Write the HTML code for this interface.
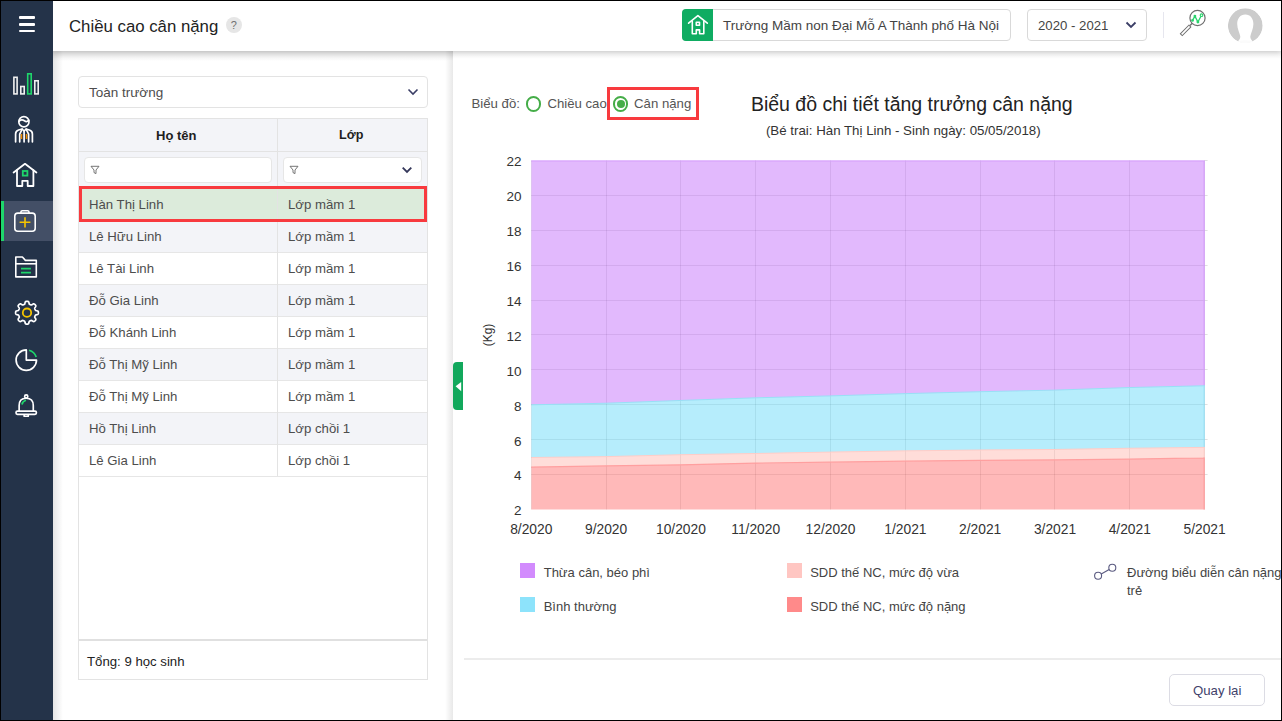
<!DOCTYPE html>
<html><head><meta charset="utf-8">
<style>
*{box-sizing:border-box;margin:0;padding:0}
html,body{width:1282px;height:721px;overflow:hidden;background:#000;font-family:"Liberation Sans",sans-serif;}
.abs{position:absolute}
#app{position:absolute;left:1px;top:1px;width:1280px;height:719px;background:#fff;overflow:hidden}
#side{position:absolute;left:0;top:0;width:52px;height:719px;background:#243349;z-index:4}
#header{position:absolute;left:52px;top:0;width:1228px;height:50px;background:#fff;z-index:3;box-shadow:0 1px 6px rgba(0,0,0,0.18)}
#left{position:absolute;left:52px;top:50px;width:400px;height:669px;background:#fff;overflow:hidden}
#right{position:absolute;left:452px;top:50px;width:828px;height:669px;background:#fff;overflow:hidden}
.t{position:absolute;white-space:nowrap;line-height:1}
</style></head><body>
<div id="app">
  <div id="side">
    <div class="abs" style="left:17.8px;top:15px;width:16.6px;height:2.8px;background:#fff;border-radius:1px"></div>
    <div class="abs" style="left:17.8px;top:21.8px;width:16.6px;height:2.8px;background:#fff;border-radius:1px"></div>
    <div class="abs" style="left:17.8px;top:28.5px;width:16.6px;height:2.8px;background:#fff;border-radius:1px"></div>
    <div class="abs" style="left:0;top:200px;width:52px;height:40px;background:#434f66"></div>
    <div class="abs" style="left:0;top:200px;width:3px;height:40px;background:#1ed66b"></div>
    <svg class="abs" style="left:0;top:0" width="52" height="719" viewBox="0 0 52 719">
      <g fill="none" stroke="#fff" stroke-width="1.8">
        <!-- bars -->
      <g fill="none" stroke="#f0f0f0" stroke-width="1.6">
        <rect x="12.9" y="76.3" width="3.2" height="16.6"/>
        <rect x="19.8" y="85.5" width="3.4" height="7.4"/>
        <rect x="33.8" y="79.8" width="3.4" height="13.1"/>
      </g>
      <rect x="26.7" y="72.8" width="3.5" height="20.1" fill="none" stroke="#1ed66b" stroke-width="1.6"/>
      <!-- person -->
      <g fill="none" stroke="#fff" stroke-width="1.7" stroke-linecap="round" stroke-linejoin="round">
        <circle cx="22.9" cy="120.8" r="5.1"/>
        <path d="M18.2 120.2 Q20.6 118 23.4 119.8 Q25.8 121.4 27.8 119.4"/>
        <path d="M14.6 140.8 V133 Q14.6 129.9 17.6 129 L21.2 128 L23.1 130 L25.1 128 L28.4 129 Q31.4 129.9 31.4 133 V140.8"/>
        <path d="M21.2 128.2 L18.7 133.2 V140.8 M25.1 128.2 L27.6 133.2 V140.8 M23.1 130.4 V140.8"/>
      </g>
      <path d="M20.5 133 V138 M25.5 133 V138" stroke="#f08c00" stroke-width="1.5"/>
      <!-- house -->
      <g fill="none" stroke="#fff" stroke-width="1.8" stroke-linejoin="round" stroke-linecap="round">
        <path d="M12.6 171.5 L24 162.8 L35.4 171.5"/>
        <path d="M16 169.2 V185 H21.3 V179.8 H26.7 V185 H32.4 V169.2"/>
      </g>
      <rect x="21.8" y="170" width="4.6" height="4.6" fill="none" stroke="#1ed66b" stroke-width="1.8"/>
      <!-- medical kit -->
      <g fill="none" stroke="#fff" stroke-width="1.6">
        <rect x="13.8" y="212.1" width="20.4" height="18.2" rx="3"/>
        <path d="M19.9 212.1 V211 Q19.9 209.7 21.3 209.7 H26.6 Q28 209.7 28 211 V212.1"/>
      </g>
      <path d="M18.6 221.3 H29.4 M24 216.2 V226.6" stroke="#f5c400" stroke-width="1.6"/>
      <!-- folder -->
      <g fill="none" stroke="#fff" stroke-width="1.6" stroke-linejoin="round">
        <path d="M14.8 256 H21.4 L24.4 259.4 H35.3 V275.9 H14.8 Z"/>
        <path d="M14.8 262.8 H35.3"/>
      </g>
      <path d="M20 267.6 H29.9 M20 271.7 H29.9" stroke="#1ed66b" stroke-width="1.7"/>
      <!-- gear -->
      <g transform="translate(26,311.7)">
        <path fill="none" stroke="#fff" stroke-width="1.7" stroke-linejoin="round" d="M0.00,-11.40 L0.37,-11.39 L0.74,-11.35 L1.11,-11.26 L1.46,-11.06 L1.75,-10.62 L1.96,-9.86 L2.12,-9.09 L2.31,-8.64 L2.55,-8.41 L2.80,-8.26 L3.07,-8.15 L3.33,-8.04 L3.59,-7.93 L3.86,-7.83 L4.14,-7.75 L4.47,-7.74 L4.93,-7.93 L5.58,-8.36 L6.27,-8.75 L6.79,-8.85 L7.18,-8.75 L7.50,-8.55 L7.79,-8.32 L8.06,-8.06 L8.32,-7.79 L8.55,-7.50 L8.75,-7.18 L8.85,-6.79 L8.75,-6.27 L8.36,-5.58 L7.93,-4.93 L7.74,-4.47 L7.75,-4.14 L7.83,-3.86 L7.93,-3.59 L8.04,-3.33 L8.15,-3.07 L8.26,-2.80 L8.41,-2.55 L8.64,-2.31 L9.09,-2.12 L9.86,-1.96 L10.62,-1.75 L11.06,-1.46 L11.26,-1.11 L11.35,-0.74 L11.39,-0.37 L11.40,-0.00 L11.39,0.37 L11.35,0.74 L11.26,1.11 L11.06,1.46 L10.62,1.75 L9.86,1.96 L9.09,2.12 L8.64,2.31 L8.41,2.55 L8.26,2.80 L8.15,3.07 L8.04,3.33 L7.93,3.59 L7.83,3.86 L7.75,4.14 L7.74,4.47 L7.93,4.93 L8.36,5.58 L8.75,6.27 L8.85,6.79 L8.75,7.18 L8.55,7.50 L8.32,7.79 L8.06,8.06 L7.79,8.32 L7.50,8.55 L7.18,8.75 L6.79,8.85 L6.27,8.75 L5.58,8.36 L4.93,7.93 L4.47,7.74 L4.14,7.75 L3.86,7.83 L3.59,7.93 L3.33,8.04 L3.07,8.15 L2.80,8.26 L2.55,8.41 L2.31,8.64 L2.12,9.09 L1.96,9.86 L1.75,10.62 L1.46,11.06 L1.11,11.26 L0.74,11.35 L0.37,11.39 L0.00,11.40 L-0.37,11.39 L-0.74,11.35 L-1.11,11.26 L-1.46,11.06 L-1.75,10.62 L-1.96,9.86 L-2.12,9.09 L-2.31,8.64 L-2.55,8.41 L-2.80,8.26 L-3.07,8.15 L-3.33,8.04 L-3.59,7.93 L-3.86,7.83 L-4.14,7.75 L-4.47,7.74 L-4.93,7.93 L-5.58,8.36 L-6.27,8.75 L-6.79,8.85 L-7.18,8.75 L-7.50,8.55 L-7.79,8.32 L-8.06,8.06 L-8.32,7.79 L-8.55,7.50 L-8.75,7.18 L-8.85,6.79 L-8.75,6.27 L-8.36,5.58 L-7.93,4.93 L-7.74,4.47 L-7.75,4.14 L-7.83,3.86 L-7.93,3.59 L-8.04,3.33 L-8.15,3.07 L-8.26,2.80 L-8.41,2.55 L-8.64,2.31 L-9.09,2.12 L-9.86,1.96 L-10.62,1.75 L-11.06,1.46 L-11.26,1.11 L-11.35,0.74 L-11.39,0.37 L-11.40,0.00 L-11.39,-0.37 L-11.35,-0.74 L-11.26,-1.11 L-11.06,-1.46 L-10.62,-1.75 L-9.86,-1.96 L-9.09,-2.12 L-8.64,-2.31 L-8.41,-2.55 L-8.26,-2.80 L-8.15,-3.07 L-8.04,-3.33 L-7.93,-3.59 L-7.83,-3.86 L-7.75,-4.14 L-7.74,-4.47 L-7.93,-4.93 L-8.36,-5.58 L-8.75,-6.27 L-8.85,-6.79 L-8.75,-7.18 L-8.55,-7.50 L-8.32,-7.79 L-8.06,-8.06 L-7.79,-8.32 L-7.50,-8.55 L-7.18,-8.75 L-6.79,-8.85 L-6.27,-8.75 L-5.58,-8.36 L-4.93,-7.93 L-4.47,-7.74 L-4.14,-7.75 L-3.86,-7.83 L-3.59,-7.93 L-3.33,-8.04 L-3.07,-8.15 L-2.80,-8.26 L-2.55,-8.41 L-2.31,-8.64 L-2.12,-9.09 L-1.96,-9.86 L-1.75,-10.62 L-1.46,-11.06 L-1.11,-11.26 L-0.74,-11.35 L-0.37,-11.39 Z"/>
        <circle r="4.2" fill="none" stroke="#f5c400" stroke-width="1.8"/>
      </g>
      <!-- pie -->
      <path d="M25.3 348.9 A10.2 10.2 0 1 0 35.5 359.1 H25.3 Z" fill="none" stroke="#fff" stroke-width="1.7" stroke-linejoin="round"/>
      <path d="M28.1 349.2 A10.3 10.3 0 0 1 35.2 356.1" fill="none" stroke="#1ed66b" stroke-width="1.7"/>
      <!-- bell -->
      <g transform="translate(25.3,405) scale(0.93) translate(-25.3,-405)">
      <g fill="none" stroke="#fff" stroke-width="1.8" stroke-linejoin="round">
        <circle cx="25.2" cy="394.8" r="1.7"/>
        <path d="M17.6 410.6 V404.5 Q17.6 396.7 25.2 396.7 Q32.8 396.7 32.8 404.5 V410.6"/>
        <path d="M15.8 410.6 H34.6 Q36.2 410.6 36.2 412.3 Q36.2 414 34.6 414 H15.8 Q14.2 414 14.2 412.3 Q14.2 410.6 15.8 410.6 Z"/>
        <path d="M23 414.2 V416 H27.4 V414.2"/>
      </g>
      <path d="M20.6 403.4 Q21.4 399.6 25 398.8" fill="none" stroke="#1ed66b" stroke-width="1.8"/>
      </g>
    </svg>
  </div>
  <div id="header">
    <div class="t" style="left:16px;top:18px;font-size:16.8px;color:#222">Chiều cao cân nặng</div>
    <div class="abs" style="left:173.2px;top:16px;width:15.8px;height:15.8px;border-radius:50%;background:#e6e6e6"></div>
    <div class="t" style="left:177.8px;top:19px;font-size:11px;color:#707070">?</div>
    <!-- school box -->
    <div class="abs" style="left:629px;top:8px;width:329px;height:32px;border:1px solid #d9d9d9;border-radius:4px;background:#fff"></div>
    <div class="abs" style="left:629px;top:8px;width:31px;height:32px;background:#0fac62;border-radius:4px 0 0 4px"></div>
    <svg class="abs" style="left:628px;top:8px" width="32" height="32" viewBox="0 0 32 32">
      <g fill="none" stroke="#fff" stroke-width="1.6" stroke-linejoin="round" stroke-linecap="round">
        <path d="M7.6 14.2 L16.9 6.6 L26.3 14.2"/>
        <path d="M11.3 12.4 V24.7 H15.3 V20.9 H18.6 V24.7 H22.8 V12.4"/>
        <rect x="15.3" y="13.2" width="3.2" height="3"/>
      </g>
    </svg>
    <div class="t" style="left:670px;top:18px;font-size:13.5px;color:#444">Trường Mầm non Đại Mỗ A Thành phố Hà Nội</div>
    <!-- year -->
    <div class="abs" style="left:974px;top:8px;width:120px;height:32px;border:1px solid #d9d9d9;border-radius:4px;background:#fff"></div>
    <div class="t" style="left:985px;top:18px;font-size:13.2px;color:#444">2020 - 2021</div>
    <svg class="abs" style="left:1072px;top:19px" width="12" height="10" viewBox="0 0 12 10">
      <path d="M1.5 2.5 L6 7 L10.5 2.5" fill="none" stroke="#3b3e66" stroke-width="1.8"/>
    </svg>
    <div class="abs" style="left:1110px;top:11px;width:1px;height:26px;background:#e6e6ee"></div>
    <!-- search chart icon -->
    <svg class="abs" style="left:1125px;top:2px" width="34" height="36" viewBox="0 0 34 36">
      <circle cx="19.5" cy="15" r="7.6" fill="none" stroke="#6e6e6e" stroke-width="1.2"/>
      <path d="M14.3 20.3 L12 22.6" stroke="#6e6e6e" stroke-width="1.4"/>
      <rect x="-6.05" y="-1.35" width="12.1" height="2.7" transform="translate(7.6,27.4) rotate(-45)" fill="#fff" stroke="#6e6e6e" stroke-width="1"/>
      <path d="M14.5 17.4 L16.9 13.1 L19.9 19 L23.5 12.2" fill="none" stroke="#2bd46d" stroke-width="1.3" stroke-linejoin="round"/>
      <circle cx="14.5" cy="17.4" r="1.4" fill="#2bd46d"/><circle cx="16.9" cy="13.1" r="1.4" fill="#2bd46d"/><circle cx="19.9" cy="19" r="1.4" fill="#2bd46d"/><circle cx="23.5" cy="12.2" r="1.3" fill="#fff" stroke="#2bd46d" stroke-width="1.1"/>
    </svg>
    <!-- avatar -->
    <svg class="abs" style="left:1174px;top:6px" width="38" height="40" viewBox="0 0 38 40">
      <defs><clipPath id="avc"><circle cx="18.3" cy="18.7" r="17.4"/></clipPath></defs>
      <g clip-path="url(#avc)">
      <circle cx="18.3" cy="18.7" r="17.4" fill="#cccccc"/>
      <path d="M18.3 7.4 C23.5 7.4 26.4 11.5 26.4 17 C26.4 22 23.9 26 23.3 29.5 C23.3 31.5 24.3 32.8 25.3 34 Q26.5 35.5 25 37 L11.6 37 Q10.1 35.5 11.3 34 C12.3 32.8 13.3 31.5 13.3 29.5 C12.7 26 10.2 22 10.2 17 C10.2 11.5 13.1 7.4 18.3 7.4 Z" fill="#fff"/>
      <ellipse cx="18.3" cy="39.2" rx="16" ry="6" fill="#fbfbfb"/>
      </g>
    </svg>
  </div>
  <div id="left">
    <div class="abs" style="left:25px;top:25px;width:350px;height:32px;border:1px solid #e3e3e3;border-radius:4px;background:#fff"></div>
    <div class="t" style="left:36px;top:35px;font-size:13.5px;color:#4d4d4d">Toàn trường</div>
    <svg class="abs" style="left:354px;top:36px" width="12" height="10" viewBox="0 0 12 10"><path d="M1.5 2.5 L6 7 L10.5 2.5" fill="none" stroke="#3b3e66" stroke-width="1.6"/></svg>
    <div class="abs" style="left:25px;top:67px;width:350px;height:562px;border:1px solid #e3e3e3;background:#fff"></div>
    <div class="abs" style="left:26px;top:68px;width:348px;height:70px;background:#f3f4f8"></div>
    <div class="abs" style="left:26px;top:100px;width:348px;height:1px;background:#e3e3e3"></div>
    <div class="abs" style="left:224px;top:68px;width:1px;height:357px;background:#e3e3e3"></div>
    <div class="t" style="left:103px;top:78px;font-size:13px;font-weight:bold;color:#1e1e1e">Họ tên</div>
    <div class="t" style="left:286px;top:78.4px;font-size:12.6px;font-weight:bold;color:#1e1e1e">Lớp</div>
    <div class="abs" style="left:31px;top:106px;width:188px;height:26px;border:1px solid #e6e6e6;border-radius:4px;background:#fff"></div>
    <div class="abs" style="left:230px;top:106px;width:139px;height:26px;border:1px solid #e6e6e6;border-radius:4px;background:#fff"></div>
    <svg class="abs" style="left:37px;top:114px" width="10" height="10" viewBox="0 0 10 10"><path d="M1 1.3 H9 L6 5 V8.6 L4 7.6 V5 Z" fill="none" stroke="#666" stroke-width="0.9" stroke-linejoin="round"/></svg>
    <svg class="abs" style="left:236px;top:114px" width="10" height="10" viewBox="0 0 10 10"><path d="M1 1.3 H9 L6 5 V8.6 L4 7.6 V5 Z" fill="none" stroke="#666" stroke-width="0.9" stroke-linejoin="round"/></svg>
    <svg class="abs" style="left:348px;top:114px" width="12" height="10" viewBox="0 0 12 10"><path d="M1.7 2.6 L6 6.9 L10.3 2.6" fill="none" stroke="#34375a" stroke-width="1.8"/></svg>
    <div class="abs" style="left:26px;top:138px;width:348px;height:32px;background:#dcebdb;border-bottom:1px solid #e6e6e6"></div>
    <div class="t" style="left:36px;top:147.3px;font-size:13.2px;color:#4d4d4d">Hàn Thị Linh</div>
    <div class="t" style="left:235px;top:147.3px;font-size:13.2px;color:#4d4d4d">Lớp mầm 1</div>
    <div class="abs" style="left:26px;top:170px;width:348px;height:32px;background:#f3f4f8;border-bottom:1px solid #e6e6e6"></div>
    <div class="t" style="left:36px;top:179.3px;font-size:13.2px;color:#4d4d4d">Lê Hữu Linh</div>
    <div class="t" style="left:235px;top:179.3px;font-size:13.2px;color:#4d4d4d">Lớp mầm 1</div>
    <div class="abs" style="left:26px;top:202px;width:348px;height:32px;background:#fff;border-bottom:1px solid #e6e6e6"></div>
    <div class="t" style="left:36px;top:211.3px;font-size:13.2px;color:#4d4d4d">Lê Tài Linh</div>
    <div class="t" style="left:235px;top:211.3px;font-size:13.2px;color:#4d4d4d">Lớp mầm 1</div>
    <div class="abs" style="left:26px;top:234px;width:348px;height:32px;background:#f3f4f8;border-bottom:1px solid #e6e6e6"></div>
    <div class="t" style="left:36px;top:243.3px;font-size:13.2px;color:#4d4d4d">Đỗ Gia Linh</div>
    <div class="t" style="left:235px;top:243.3px;font-size:13.2px;color:#4d4d4d">Lớp mầm 1</div>
    <div class="abs" style="left:26px;top:266px;width:348px;height:32px;background:#fff;border-bottom:1px solid #e6e6e6"></div>
    <div class="t" style="left:36px;top:275.3px;font-size:13.2px;color:#4d4d4d">Đỗ Khánh Linh</div>
    <div class="t" style="left:235px;top:275.3px;font-size:13.2px;color:#4d4d4d">Lớp mầm 1</div>
    <div class="abs" style="left:26px;top:298px;width:348px;height:32px;background:#f3f4f8;border-bottom:1px solid #e6e6e6"></div>
    <div class="t" style="left:36px;top:307.3px;font-size:13.2px;color:#4d4d4d">Đỗ Thị Mỹ Linh</div>
    <div class="t" style="left:235px;top:307.3px;font-size:13.2px;color:#4d4d4d">Lớp mầm 1</div>
    <div class="abs" style="left:26px;top:330px;width:348px;height:32px;background:#fff;border-bottom:1px solid #e6e6e6"></div>
    <div class="t" style="left:36px;top:339.3px;font-size:13.2px;color:#4d4d4d">Đỗ Thị Mỹ Linh</div>
    <div class="t" style="left:235px;top:339.3px;font-size:13.2px;color:#4d4d4d">Lớp mầm 1</div>
    <div class="abs" style="left:26px;top:362px;width:348px;height:32px;background:#f3f4f8;border-bottom:1px solid #e6e6e6"></div>
    <div class="t" style="left:36px;top:371.3px;font-size:13.2px;color:#4d4d4d">Hồ Thị Linh</div>
    <div class="t" style="left:235px;top:371.3px;font-size:13.2px;color:#4d4d4d">Lớp chồi 1</div>
    <div class="abs" style="left:26px;top:394px;width:348px;height:32px;background:#fff;border-bottom:1px solid #e6e6e6"></div>
    <div class="t" style="left:36px;top:403.3px;font-size:13.2px;color:#4d4d4d">Lê Gia Linh</div>
    <div class="t" style="left:235px;top:403.3px;font-size:13.2px;color:#4d4d4d">Lớp chồi 1</div>
    <div class="abs" style="left:224px;top:68px;width:1px;height:357px;background:#e3e3e3"></div>
    <div class="abs" style="left:26px;top:135px;width:348px;height:36px;border:3px solid #f83a3e"></div>
    <div class="abs" style="left:26px;top:588px;width:348px;height:2px;background:#e0e0e0"></div>
    <div class="t" style="left:34px;top:604px;font-size:13.2px;color:#222">Tổng: 9 học sinh</div>
    <div class="abs" style="left:392px;top:0;width:8px;height:669px;background:linear-gradient(to right,rgba(0,0,0,0),rgba(0,0,0,0.09))"></div>
    <div class="abs" style="left:0;top:0;width:400px;height:10px;background:linear-gradient(to bottom,rgba(0,0,0,0.12),rgba(0,0,0,0))"></div>
    <div class="abs" style="left:0;top:0;width:10px;height:669px;background:linear-gradient(to right,rgba(0,0,0,0.1),rgba(0,0,0,0))"></div>
  </div>
  <div id="right">
    <div class="abs" style="left:0;top:0;width:828px;height:8px;background:linear-gradient(to bottom,rgba(0,0,0,0.06),rgba(0,0,0,0))"></div>
    <div class="t" style="left:18.5px;top:46px;font-size:13.2px;color:#555">Biểu đồ:</div>
    <div class="abs" style="left:72.9px;top:45.2px;width:15.6px;height:15.6px;border:2px solid #45ad48;border-radius:50%"></div>
    <div class="t" style="left:94.4px;top:46px;font-size:13.2px;color:#555">Chiều cao</div>
    <div class="abs" style="left:154px;top:36px;width:92px;height:33px;border:3px solid #f83a3e"></div>
    <div class="abs" style="left:159.7px;top:45px;width:15.6px;height:15.6px;border:2px solid #45ad48;border-radius:50%"></div>
    <div class="abs" style="left:163.5px;top:48.8px;width:8px;height:8px;background:#45ad48;border-radius:50%"></div>
    <div class="t" style="left:181.1px;top:46px;font-size:13.2px;color:#555">Cân nặng</div>
    <div class="t" style="left:297.9px;top:44.4px;font-size:19.5px;color:#222">Biểu đồ chi tiết tăng trưởng cân nặng</div>
    <div class="t" style="left:312.9px;top:73px;font-size:13.3px;color:#333">(Bé trai: Hàn Thị Linh - Sinh ngày: 05/05/2018)</div>
    <svg class="abs" style="left:0;top:0" width="828" height="669" viewBox="0 0 828 669">
    <path d="M78.3 144.5 H754.6 M78.3 179.5 H754.6 M78.3 214.5 H754.6 M78.3 249.5 H754.6 M78.3 283.5 H754.6 M78.3 318.5 H754.6 M78.3 353.5 H754.6 M78.3 388.5 H754.6 M78.3 423.5 H754.6 M751.6 109.5 H754.6 M153.5 109.4 V458.4 M227.5 109.4 V458.4 M302.5 109.4 V458.4 M377.5 109.4 V458.4 M452.5 109.4 V458.4 M527.5 109.4 V458.4 M601.5 109.4 V458.4 M676.5 109.4 V458.4 M751.5 109.4 V458.4" stroke="rgba(0,0,0,0.12)" stroke-width="1" fill="none"/>
    <polygon points="78.30,109.40 751.60,109.40 751.60,334.78 676.79,336.53 601.98,339.14 527.17,340.71 452.36,342.63 377.54,344.90 302.73,346.82 227.92,349.44 153.11,352.23 78.30,353.80" fill="rgba(197,115,251,0.5)"/>
    <polygon points="78.30,353.80 153.11,352.23 227.92,349.44 302.73,346.82 377.54,344.90 452.36,342.63 527.17,340.71 601.98,339.14 676.79,336.53 751.60,334.78 751.60,396.38 676.79,397.25 601.98,398.47 527.17,399.00 452.36,399.87 377.54,401.09 302.73,402.49 227.92,403.71 153.11,405.63 78.30,406.50" fill="rgba(109,219,249,0.5)"/>
    <polygon points="78.30,406.50 153.11,405.63 227.92,403.71 302.73,402.49 377.54,401.09 452.36,399.87 527.17,399.00 601.98,398.47 676.79,397.25 751.60,396.38 751.60,406.85 676.79,408.07 601.98,408.94 527.17,409.29 452.36,410.17 377.54,411.21 302.73,412.08 227.92,413.83 153.11,414.88 78.30,416.10" fill="rgba(255,187,179,0.5)"/>
    <polygon points="78.30,416.10 153.11,414.88 227.92,413.83 302.73,412.08 377.54,411.21 452.36,410.17 527.17,409.29 601.98,408.94 676.79,408.07 751.60,406.85 751.60,458.40 78.30,458.40" fill="rgba(255,115,115,0.5)"/>
    <path d="M78.3,110.0 H751.1 V334.78" fill="none" stroke="#d6a0fb" stroke-width="1.2"/>
    <polyline points="78.30,353.80 153.11,352.23 227.92,349.44 302.73,346.82 377.54,344.90 452.36,342.63 527.17,340.71 601.98,339.14 676.79,336.53 751.60,334.78 751.1,334.78 751.1,396.38" fill="none" stroke="#98e0f6" stroke-width="1"/>
    <polyline points="78.30,406.50 153.11,405.63 227.92,403.71 302.73,402.49 377.54,401.09 452.36,399.87 527.17,399.00 601.98,398.47 676.79,397.25 751.60,396.38 751.1,396.38 751.1,406.85" fill="none" stroke="#ffcdc8" stroke-width="1"/>
    <polyline points="78.30,416.10 153.11,414.88 227.92,413.83 302.73,412.08 377.54,411.21 452.36,410.17 527.17,409.29 601.98,408.94 676.79,408.07 751.60,406.85 751.1,406.85 751.1,458.4" fill="none" stroke="#ff9f9f" stroke-width="1.2"/>
    <path d="M78.5 109.4 V458.4" stroke="rgba(0,0,0,0.05)" stroke-width="1"/>
    </svg>
    <div class="t" style="right:759.5px;top:453.3px;font-size:13.5px;color:#333">2</div>
    <div class="t" style="right:759.5px;top:418.4px;font-size:13.5px;color:#333">4</div>
    <div class="t" style="right:759.5px;top:383.5px;font-size:13.5px;color:#333">6</div>
    <div class="t" style="right:759.5px;top:348.6px;font-size:13.5px;color:#333">8</div>
    <div class="t" style="right:759.5px;top:313.7px;font-size:13.5px;color:#333">10</div>
    <div class="t" style="right:759.5px;top:278.8px;font-size:13.5px;color:#333">12</div>
    <div class="t" style="right:759.5px;top:243.9px;font-size:13.5px;color:#333">14</div>
    <div class="t" style="right:759.5px;top:209.0px;font-size:13.5px;color:#333">16</div>
    <div class="t" style="right:759.5px;top:174.1px;font-size:13.5px;color:#333">18</div>
    <div class="t" style="right:759.5px;top:139.2px;font-size:13.5px;color:#333">20</div>
    <div class="t" style="right:759.5px;top:104.3px;font-size:13.5px;color:#333">22</div>
    <div class="t" style="left:38.3px;width:80px;text-align:center;top:472px;font-size:13.8px;color:#333">8/2020</div>
    <div class="t" style="left:113.1px;width:80px;text-align:center;top:472px;font-size:13.8px;color:#333">9/2020</div>
    <div class="t" style="left:187.9px;width:80px;text-align:center;top:472px;font-size:13.8px;color:#333">10/2020</div>
    <div class="t" style="left:262.7px;width:80px;text-align:center;top:472px;font-size:13.8px;color:#333">11/2020</div>
    <div class="t" style="left:337.5px;width:80px;text-align:center;top:472px;font-size:13.8px;color:#333">12/2020</div>
    <div class="t" style="left:412.4px;width:80px;text-align:center;top:472px;font-size:13.8px;color:#333">1/2021</div>
    <div class="t" style="left:487.2px;width:80px;text-align:center;top:472px;font-size:13.8px;color:#333">2/2021</div>
    <div class="t" style="left:562.0px;width:80px;text-align:center;top:472px;font-size:13.8px;color:#333">3/2021</div>
    <div class="t" style="left:636.8px;width:80px;text-align:center;top:472px;font-size:13.8px;color:#333">4/2021</div>
    <div class="t" style="left:711.6px;width:80px;text-align:center;top:472px;font-size:13.8px;color:#333">5/2021</div>
    <div class="t" style="left:35px;top:284.3px;font-size:12px;color:#333;transform:translate(-50%,-50%) rotate(-90deg)">(Kg)</div>
    <div class="abs" style="left:67px;top:512px;width:15px;height:15px;background:#d28bfd"></div>
    <div class="abs" style="left:67px;top:546px;width:15px;height:15px;background:#8de3fb"></div>
    <div class="abs" style="left:334px;top:512px;width:15px;height:15px;background:#ffc6c2"></div>
    <div class="abs" style="left:334px;top:546px;width:15px;height:15px;background:#ff8a8a"></div>
    <div class="t" style="left:90.7px;top:515px;font-size:13px;color:#444">Thừa cân, béo phì</div>
    <div class="t" style="left:90.7px;top:549px;font-size:13px;color:#444">Bình thường</div>
    <div class="t" style="left:357.2px;top:515px;font-size:13px;color:#444">SDD thế NC, mức độ vừa</div>
    <div class="t" style="left:357.2px;top:549px;font-size:13px;color:#444">SDD thế NC, mức độ nặng</div>
    <svg class="abs" style="left:636px;top:508px" width="32" height="24" viewBox="0 0 32 24"><circle cx="9.1" cy="16.7" r="3.5" fill="#fff" stroke="#5a5a80" stroke-width="1.1"/><circle cx="23.3" cy="8.8" r="3.5" fill="#fff" stroke="#5a5a80" stroke-width="1.1"/><path d="M12.2 15 L20.2 10.5" stroke="#5a5a80" stroke-width="1.1"/></svg>
    <div class="t" style="left:674px;top:515px;font-size:13px;color:#444">Đường biểu diễn cân nặng</div>
    <div class="t" style="left:674px;top:533px;font-size:13px;color:#444">trẻ</div>
    <div class="abs" style="left:11px;top:607px;width:817px;height:2px;background:#ececec"></div>
    <div class="abs" style="left:716px;top:623px;width:96px;height:32px;border:1px solid #dcdce4;border-radius:5px;background:#fff"></div>
    <div class="t" style="left:740px;top:633px;font-size:13.2px;color:#41416a">Quay lại</div>
    <div class="abs" style="left:0;top:311px;width:10px;height:48px;background:#12a85c;border-radius:4px 0 0 4px"></div>
    <svg class="abs" style="left:0;top:311px" width="10" height="48" viewBox="0 0 10 48"><path d="M2.6 24.2 L8.2 19.9 V29.2 Z" fill="#fff"/></svg>
  </div>
</div>
</body></html>
